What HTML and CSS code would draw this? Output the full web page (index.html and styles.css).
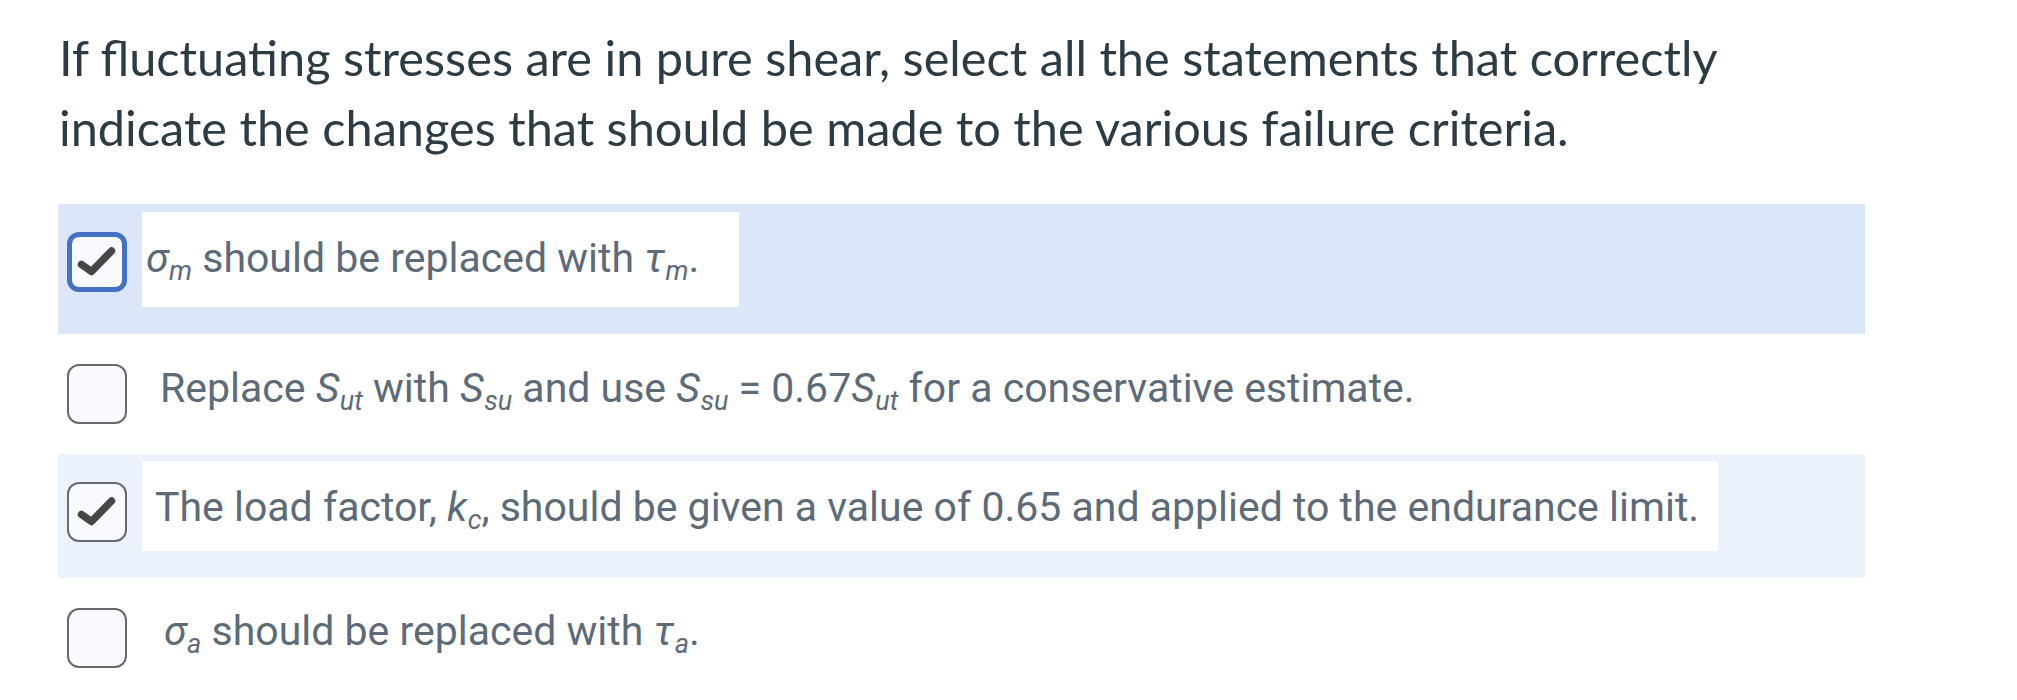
FILE: index.html
```html
<!DOCTYPE html>
<html lang="en">
<head>
<meta charset="utf-8">
<title>Question</title>
<link rel="stylesheet" href="styles.css">
</head>
<body>
<div class="page">
  <p class="question">If fluctuating stresses are in pure shear, select all the statements that correctly indicate the changes that should be made to the various failure criteria.</p>
  <div class="options">
    <div class="option option-1 selected focused">
      <span class="box box-focus"><svg viewBox="0 0 60 60" class="tick"><path d="M14.5 32.5 L24.5 39.5 L44.5 19"/></svg></span>
      <span class="label label-white label-1"><i class="m">σ</i><sub>m</sub> should be replaced with <i class="m">τ</i><sub>m</sub>.</span>
    </div>
    <div class="option option-2">
      <span class="box"></span>
      <span class="label label-2">Replace <i class="m">S</i><sub>ut</sub> with <i class="m">S</i><sub>su</sub> and use <i class="m">S</i><sub>su</sub> = 0.67<i class="m">S</i><sub>ut</sub> for a conservative estimate.</span>
    </div>
    <div class="option option-3 selected">
      <span class="box"><svg viewBox="0 0 60 60" class="tick"><path d="M14.5 32.5 L24.5 39.5 L44.5 19"/></svg></span>
      <span class="label label-white label-3">The load factor, <i class="m">k</i><sub>c</sub>, should be given a value of 0.65 and applied to the endurance limit.</span>
    </div>
    <div class="option option-4">
      <span class="box"></span>
      <span class="label label-4"><i class="m">σ</i><sub>a</sub> should be replaced with <i class="m">τ</i><sub>a</sub>.</span>
    </div>
  </div>
</div>
</body>
</html>
```

FILE: styles.css
```css
* { box-sizing: border-box; }
html, body { margin: 0; padding: 0; background: #ffffff; }
.page {
  padding: 22px 0 0 59px;
  width: 1865px;
}
.question {
  margin: 0;
  font-family: Lato, "Liberation Sans", sans-serif;
  font-size: 48.7px;
  line-height: 70px;
  color: #2d3b45;
  width: 1720px;
}
.options {
  margin-top: 42px;
  margin-left: -1px;
  width: 1807px;
  display: flex;
  flex-direction: column;
}
.option {
  display: flex;
  align-items: flex-start;
  padding-left: 9px;
}
.option-1 { background: #dbe7f8; height: 130px; padding-top: 8px; }
.option-2 { height: 120px; padding-top: 30px; }
.option-3 { background: #ebf2fc; height: 124px; padding-top: 7px; }
.option-4 { height: 122px; padding-top: 30px; }

.box {
  flex: 0 0 60px;
  width: 60px;
  height: 60px;
  border: 2.5px solid #666a6e;
  border-radius: 12px;
  background: #f8faff;
  display: flex;
  align-items: center;
  justify-content: center;
}
.box-focus { border: 5px solid #4571c2; }
.option-1 .box { margin-top: 20px; }
.option-3 .box { margin-top: 21px; }
.tick { width: 60px; height: 60px; flex: 0 0 60px; }
.box-focus .tick { margin: -5px; }
.box .tick { margin: -2.5px; }
.tick path {
  fill: none;
  stroke: #464646;
  stroke-width: 7.5;
  stroke-linecap: round;
  stroke-linejoin: round;
}
.label {
  display: block;
  font-family: Roboto, "Liberation Sans", sans-serif;
  font-size: 41px;
  line-height: 40px;
  color: #5d6b79;
  white-space: nowrap;
}
.label-white { background: #ffffff; }
.label-1 { margin-left: 15px; height: 95px; width: 597px; padding: 26px 0 0 4px; }
.label-2 { margin-left: 33px; padding-top: 4px; }
.label-3 { margin-left: 15px; height: 90px; width: 1576px; padding: 26px 0 0 13px; }
.label-4 { margin-left: 37px; padding-top: 3px; }
.label .m { font-style: italic; }
.label sub {
  font-style: italic;
  font-size: 0.66em;
  vertical-align: -0.28em;
  line-height: 0;
  margin-left: 0.02em;
}
```
